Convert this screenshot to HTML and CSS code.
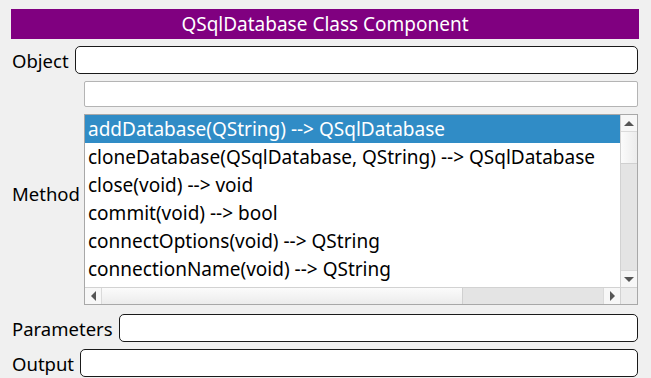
FILE: index.html
```html
<!DOCTYPE html>
<html lang="en">
<head>
    <meta charset="UTF-8">
    <meta name="viewport" content="width=device-width, initial-scale=1.0">
    <title>QSqlDatabase Class Component</title>
    <link rel="stylesheet" href="styles.css">
</head>
<body>

    <div class="panel">
        <div class="title">QSqlDatabase Class Component</div>

        <div class="row">
            <label class="label">Object</label>
            <div class="field"></div>
        </div>

        <!-- Method picker -->
        <div class="method">
            <label class="label method-label">Method</label>
            <div class="method-box">
                <div class="filter"></div>
                <div class="list">
                    <div class="items">
                        <div class="item selected">addDatabase(QString) --&gt; QSqlDatabase</div>
                        <div class="item">cloneDatabase(QSqlDatabase, QString) --&gt; QSqlDatabase</div>
                        <div class="item">close(void) --&gt; void</div>
                        <div class="item">commit(void) --&gt; bool</div>
                        <div class="item">connectOptions(void) --&gt; QString</div>
                        <div class="item">connectionName(void) --&gt; QString</div>
                    </div>
                    <div class="vbar">
                        <div class="btn"><span class="arrow up"></span></div>
                        <div class="vthumb"></div>
                        <div class="vtrack"></div>
                        <div class="btn"><span class="arrow down"></span></div>
                    </div>
                    <div class="hbar">
                        <div class="btn"><span class="arrow left"></span></div>
                        <div class="hthumb"></div>
                        <div class="htrack"></div>
                        <div class="btn"><span class="arrow right"></span></div>
                    </div>
                    <div class="corner"></div>
                </div>
            </div>
        </div>

        <div class="row params">
            <label class="label">Parameters</label>
            <div class="field"></div>
        </div>

        <div class="row output">
            <label class="label">Output</label>
            <div class="field"></div>
        </div>
    </div>

</body>
</html>
```

FILE: styles.css
```css
* {
    margin: 0;
    padding: 0;
    box-sizing: border-box;
}

body {
    background-color: #f0f0f0;
    font-family: "Noto Sans", "Open Sans", sans-serif;
    font-size: 19px;
    color: #000;
}

.panel {
    padding: 9px 12px 0 11px;
}

.title {
    height: 30px;
    background: #800080;
    color: #fff;
    text-align: center;
    font-size: 19px;
    line-height: 30px;
}

.row {
    display: flex;
    align-items: center;
    gap: 6px;
    margin-top: 7px;
    padding-left: 1px;
}

.label {
    font-size: 18.5px;
    white-space: nowrap;
}

.field {
    flex: 1;
    height: 28px;
    background: #fff;
    border: 1px solid #1a1a1a;
    border-radius: 5px;
    margin-right: 1px;
}

.params {
    margin-top: 9px;
}

.output {
    margin-top: 7px;
}

/* Method block */
.method {
    display: flex;
    align-items: center;
    margin-top: 7px;
    padding-left: 1px;
}

.method-label {
    width: 72px;
}

.method-box {
    flex: 1;
    margin-right: 1px;
}

.filter {
    height: 26px;
    background: #fff;
    border: 1px solid #b4b4b4;
    border-radius: 2px;
}

.list {
    margin-top: 7px;
    height: 191px;
    background: #fff;
    border: 1px solid #a8a8a8;
    display: grid;
    grid-template-columns: 1fr 17px;
    grid-template-rows: 1fr 17px;
}

.items {
    overflow: hidden;
}

.item {
    height: 28px;
    line-height: 28px;
    padding-left: 3px;
    white-space: nowrap;
}

.item.selected {
    background: #308cc6;
    color: #fff;
}

.vbar {
    display: flex;
    flex-direction: column;
    border-left: 1px solid #d2d2d2;
}

.hbar {
    display: flex;
    border-top: 1px solid #d2d2d2;
}

.btn {
    flex: 0 0 17px;
    display: flex;
    align-items: center;
    justify-content: center;
    background: #f7f7f7;
}

.vbar .btn:first-child {
    border-bottom: 1px solid #dadada;
}

.vbar .btn:last-child {
    border-top: 1px solid #dadada;
}

.hbar .btn:first-child {
    border-right: 1px solid #dadada;
}

.hbar .btn:last-child {
    border-left: 1px solid #dadada;
}

.vthumb {
    height: 32px;
    background: linear-gradient(to right, #fbfbfb, #ececec);
    border-bottom: 1px solid #d0d0d0;
}

.vtrack {
    flex: 1;
    background: #e4e4e4;
}

.hthumb {
    width: 361px;
    background: linear-gradient(to bottom, #fbfbfb, #ececec);
    border-right: 1px solid #d0d0d0;
}

.htrack {
    flex: 1;
    background: #e4e4e4;
}

.corner {
    background: #ececec;
    border-top: 1px solid #d2d2d2;
    border-left: 1px solid #d2d2d2;
}

.arrow {
    width: 0;
    height: 0;
    border: 5px solid transparent;
}

.arrow.up {
    border-bottom: 5px solid #555;
    border-top-width: 0;
}

.arrow.down {
    border-top: 5px solid #555;
    border-bottom-width: 0;
}

.arrow.left {
    border-right: 5px solid #555;
    border-left-width: 0;
}

.arrow.right {
    border-left: 5px solid #555;
    border-right-width: 0;
}
```
